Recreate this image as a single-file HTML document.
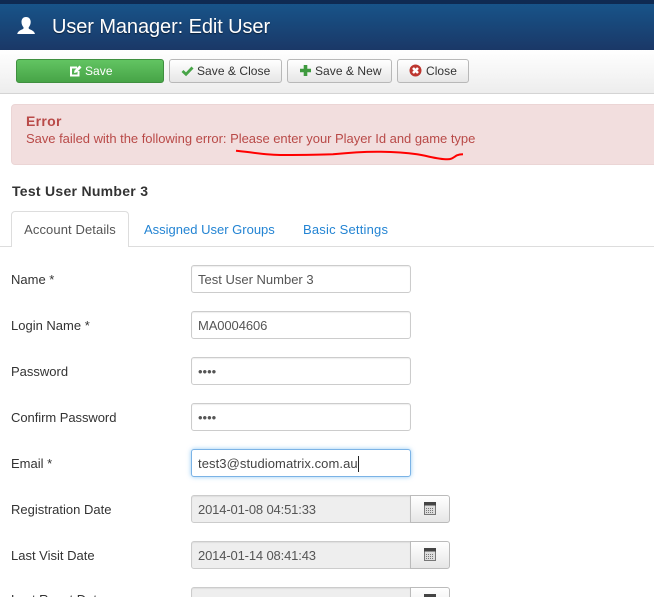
<!DOCTYPE html>
<html><head><meta charset="utf-8">
<style>
html,body{margin:0;padding:0;background:#fff;width:654px;height:597px;overflow:hidden}
#w{width:654px;height:597px;position:relative;overflow:hidden;font-family:"Liberation Sans",sans-serif;font-size:13px;color:#333}
.a{position:absolute;white-space:nowrap}
.hd{left:0;top:0;width:654px;height:50px;background:linear-gradient(#17568c,#1a3867)}
.hd0{left:0;top:0;width:654px;height:4px;background:#0f2a52}
.sub{left:0;top:50px;width:654px;height:43px;background:linear-gradient(#fff,#ededed);border-bottom:1px solid #d4d4d4}
.btn{top:59px;height:24px;box-sizing:border-box;border:1px solid #b8b8b8;border-radius:3px;background:linear-gradient(#fff,#e6e6e6);line-height:22px;color:#333;font-size:12px}
.btn svg{position:absolute}
.btn span{position:absolute;top:0;letter-spacing:.05px}
.lbl{left:11px;color:#333;line-height:18px}
.inp{left:191px;width:220px;height:28px;box-sizing:border-box;border:1px solid #ccc;border-radius:3px;background:#fff;line-height:28px;padding-left:6px;color:#555;box-shadow:inset 0 1px 1px rgba(0,0,0,.07)}
.dis{background:#eee;width:220px;border-radius:3px 0 0 3px;letter-spacing:-.15px}
.cal{left:410px;width:40px;height:28px;box-sizing:border-box;border:1px solid #bbb;border-radius:0 3px 3px 0;background:linear-gradient(#fff,#e6e6e6)}
.cal svg{position:absolute;left:13px;top:6px}
</style></head><body><div id="w">
<div class="a hd"></div><div class="a hd0"></div>
<svg class="a" style="left:17px;top:17px" width="19" height="17" viewBox="0 0 19 17"><path fill="#fff" d="M9 0C5.800 0 4.500 2.300 4.500 5c0 2.200 .9 4.200 2 5.200v1.300C5.500 12.800 1.200 13 .2 17H18c-1-4-5.300-4.200-6.300-5.500v-1.300c1.100-1 2-3 2-5.200C13.700 2.300 12.200 0 9 0z"/></svg>
<div class="a" style="left:52px;top:15px;font-size:20px;line-height:24px;color:#fff;letter-spacing:-.09px;text-shadow:0 1px 1px rgba(0,0,0,.5)">User Manager: Edit User</div>
<div class="a sub"></div>
<div class="a btn" style="left:16px;width:148px;background:linear-gradient(#62c462,#47a447);border-color:#3f8f3f;color:#fff">
<svg style="left:52px;top:5px" width="13" height="12" viewBox="0 0 13 12"><path fill="none" stroke="#fff" stroke-width="2" d="M8 2.500H2V10.500H9.500V6"/><path fill="#fff" d="M5 8l.5-2.500L10.500 .5 12.500 2.500 7.500 7.500z"/></svg>
<span style="left:68px">Save</span></div>
<div class="a btn" style="left:169px;width:113px">
<svg style="left:11px;top:5px" width="13" height="12" viewBox="0 0 13 12"><path fill="none" stroke="#47a447" stroke-width="2.800" d="M1.500 6L5 9.300 11.500 2.500"/></svg>
<span style="left:27px">Save &amp; Close</span></div>
<div class="a btn" style="left:287px;width:105px">
<svg style="left:11px;top:4px" width="13" height="13" viewBox="0 0 13 13"><path fill="#3f9a3f" d="M4.700 1h3.600v3.700H12v3.600H8.300V12H4.700V8.300H1V4.700h3.700z"/></svg>
<span style="left:27px">Save &amp; New</span></div>
<div class="a btn" style="left:397px;width:72px">
<svg style="left:11px;top:4px" width="13" height="13" viewBox="0 0 13 13"><circle cx="6.500" cy="6.500" r="6" fill="#bd362f"/><path stroke="#fff" stroke-width="2.600" d="M4 4l5 5M9 4l-5 5"/></svg>
<span style="left:28px">Close</span></div>
<div class="a" style="left:11px;top:104px;width:660px;height:61px;box-sizing:border-box;background:#f2dede;border:1px solid #ebd5d5;border-radius:4px"></div>
<div class="a" style="left:26px;top:113px;font-size:14px;line-height:16px;font-weight:bold;color:#b94a48;letter-spacing:.3px">Error</div>
<div class="a" style="left:26px;top:131px;line-height:16px;color:#b94a48;letter-spacing:-.03px">Save failed with the following error: Please enter your Player Id and game type</div>
<svg class="a" style="left:0;top:0" width="654" height="200" viewBox="0 0 654 200"><path fill="none" stroke="#f00" stroke-width="2" d="M236 150.700C250 152 265 155 283 155 300 155 318 155 333 154.300 350 152.500 365 151.700 377 151.700 392 151.700 405 152.500 417 154.300 428 156 438 159.300 447 159.300 452 159.500 454 157 457 155.300 459 154.500 461 154.300 463 154.300"/></svg>
<div class="a" style="left:12px;top:183px;font-size:14px;line-height:16px;font-weight:bold;color:#333;letter-spacing:.28px">Test User Number 3</div>
<div class="a" style="left:0;top:246px;width:654px;height:1px;background:#ddd"></div>
<div class="a" style="left:11px;top:211px;width:118px;height:36px;box-sizing:border-box;border:1px solid #ddd;border-bottom:0;border-radius:4px 4px 0 0;background:#fff;line-height:35px;text-align:center;color:#555;letter-spacing:.1px">Account Details</div>
<div class="a" style="left:144px;top:222px;line-height:16px;color:#2384d3">Assigned User Groups</div>
<div class="a" style="left:303px;top:222px;line-height:16px;color:#2384d3;letter-spacing:.2px">Basic Settings</div>

<div class="a lbl" style="top:271px">Name *</div>
<div class="a inp" style="top:265px">Test User Number 3</div>
<div class="a lbl" style="top:317px">Login Name *</div>
<div class="a inp" style="top:311px;letter-spacing:-.1px">MA0004606</div>
<div class="a lbl" style="top:363px">Password</div>
<div class="a inp" style="top:357px;line-height:27px">••••</div>
<div class="a lbl" style="top:409px;letter-spacing:-.05px">Confirm Password</div>
<div class="a inp" style="top:403px;line-height:27px">••••</div>
<div class="a lbl" style="top:455px">Email *</div>
<div class="a inp" style="top:449px;border-color:#7bb3e6;box-shadow:0 0 5px rgba(82,168,236,.6);color:#444;letter-spacing:.08px">test3@studiomatrix.com.au<span style="display:inline-block;width:1px;height:16px;background:#222;vertical-align:-4px"></span></div>
<div class="a lbl" style="top:501px">Registration Date</div>
<div class="a inp dis" style="top:495px">2014-01-08 04:51:33</div>
<div class="a cal" style="top:495px"><svg width="12" height="13" viewBox="0 0 12 13"><rect x=".5" y=".5" width="11" height="12" fill="#ddd" stroke="#777"/><rect width="12" height="3.500" fill="#444"/><path stroke="#777" stroke-dasharray="1 1" d="M2 6.500h8M2 8.500h8M2 10.500h8"/></svg></div>
<div class="a lbl" style="top:547px">Last Visit Date</div>
<div class="a inp dis" style="top:541px">2014-01-14 08:41:43</div>
<div class="a cal" style="top:541px"><svg width="12" height="13" viewBox="0 0 12 13"><rect x=".5" y=".5" width="11" height="12" fill="#ddd" stroke="#777"/><rect width="12" height="3.500" fill="#444"/><path stroke="#777" stroke-dasharray="1 1" d="M2 6.500h8M2 8.500h8M2 10.500h8"/></svg></div>
<div class="a lbl" style="top:592px;line-height:16px">Last Reset Date</div>
<div class="a inp dis" style="top:587px"></div>
<div class="a cal" style="top:587px"><svg width="12" height="13" viewBox="0 0 12 13"><rect x=".5" y=".5" width="11" height="12" fill="#ddd" stroke="#777"/><rect width="12" height="3.500" fill="#444"/></svg></div>
</div></body></html>
